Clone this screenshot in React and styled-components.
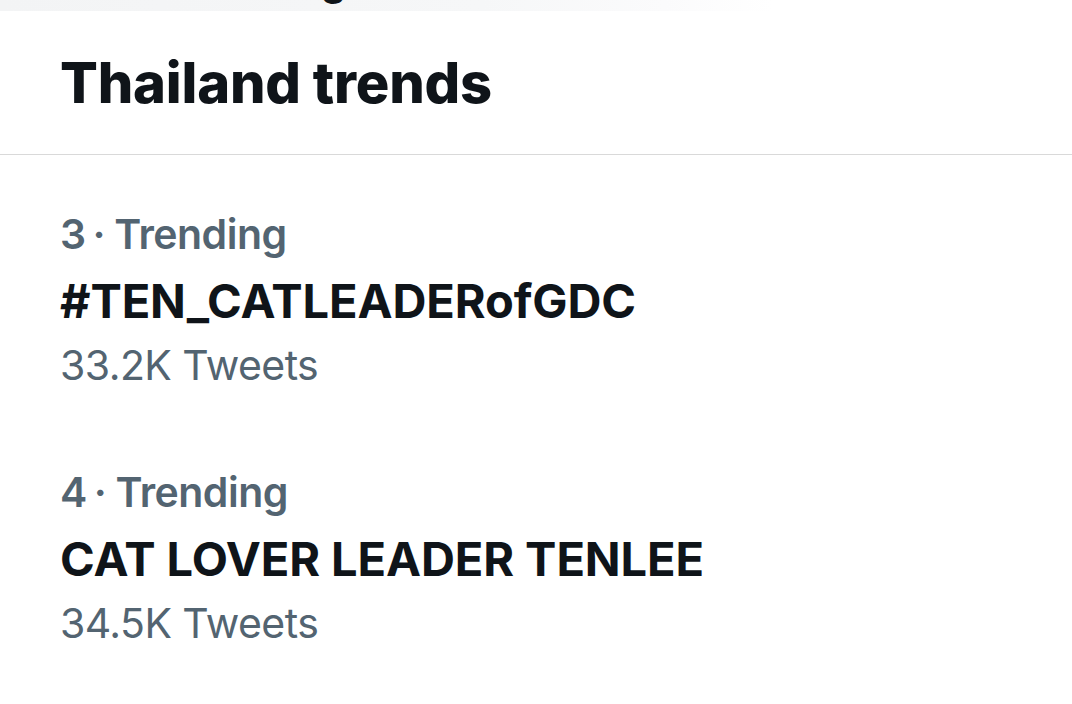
import styled, { createGlobalStyle } from "styled-components";

const GlobalStyle = createGlobalStyle`
  html, body {
    margin: 0;
    padding: 0;
    background: #ffffff;
  }
  body {
    font-family: Inter, "Noto Sans", "Liberation Sans", sans-serif;
    -webkit-font-smoothing: antialiased;
  }
`;

const trends = [
  { rank: 3, name: "#TEN_CATLEADERofGDC", count: "33.2K Tweets" },
  { rank: 4, name: "CAT LOVER LEADER TENLEE", count: "34.5K Tweets" },
];

export default function App() {
  return (
    <Page>
      <GlobalStyle />
      <SearchStrip>
        <SearchText>g</SearchText>
      </SearchStrip>
      <Header>
        <Title>Thailand trends</Title>
      </Header>
      <List>
        {trends.map((t) => (
          <Trend key={t.rank}>
            <Meta>
              {t.rank}
              <Dot>·</Dot>
              Trending
            </Meta>
            <Name>{t.name}</Name>
            <Count>{t.count}</Count>
          </Trend>
        ))}
      </List>
    </Page>
  );
}

const Page = styled.div`
  width: 1072px;
  height: 704px;
  overflow: hidden;
  background: #ffffff;
  display: flex;
  flex-direction: column;
`;

/* bottom edge of the scrolled-away search bar */
const SearchStrip = styled.div`
  height: 11px;
  flex-shrink: 0;
  overflow: hidden;
  background: linear-gradient(
    to right,
    #f3f4f5 0%,
    #f6f7f8 45%,
    #fbfbfc 62%,
    #ffffff 72%
  );
  padding-left: 321px;
`;

const SearchText = styled.div`
  font-size: 40px;
  line-height: 40px;
  font-weight: 700;
  color: #0f1419;
  margin-top: -39px;
`;

const Header = styled.div`
  height: 143px;
  display: flex;
  align-items: center;
  padding-left: 60px;
  border-bottom: 1px solid #d9d9d9;
  flex-shrink: 0;
`;

const Title = styled.h1`
  margin: 0;
  font-size: 56px;
  line-height: 68px;
  font-weight: 800;
  color: #0f1419;
  letter-spacing: -0.2px;
`;

const List = styled.div`
  display: flex;
  flex-direction: column;
  padding: 54px 0 0 60px;
`;

const Trend = styled.div`
  display: flex;
  flex-direction: column;
  height: 258px;
`;

const Meta = styled.div`
  font-size: 41px;
  line-height: 50px;
  font-weight: 600;
  color: #536471;
  letter-spacing: -0.5px;
`;

const Dot = styled.span`
  margin: 0 9px 0 7px;
`;

const Name = styled.div`
  margin-top: 12px;
  font-size: 47px;
  line-height: 60px;
  font-weight: 700;
  color: #0f1419;
  letter-spacing: -0.1px;
`;

const Count = styled.div`
  margin-top: 9px;
  font-size: 41px;
  line-height: 50px;
  font-weight: 400;
  color: #536471;
  letter-spacing: -0.55px;
`;
